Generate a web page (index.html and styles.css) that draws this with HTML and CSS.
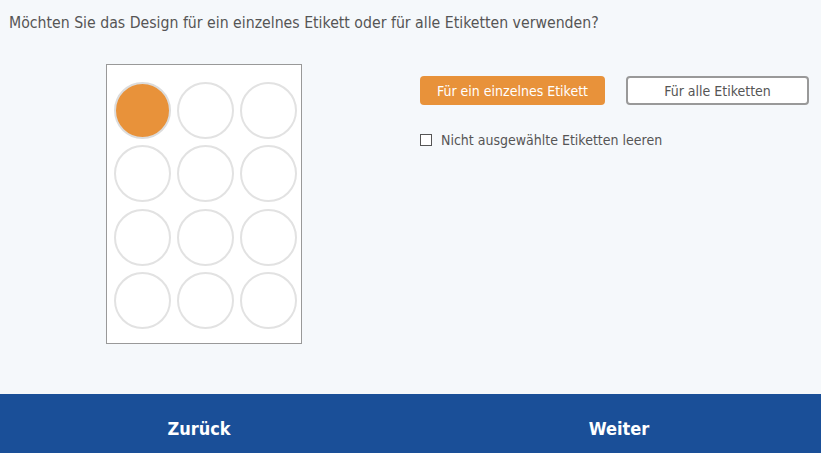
FILE: index.html
```html
<!DOCTYPE html>
<html lang="de">
<head>
  <meta charset="UTF-8">
  <meta name="viewport" content="width=device-width, initial-scale=1">
  <title>Etikett Design</title>
  <link rel="stylesheet" href="styles.css">
</head>
<body>
  <div class="page">
    <div class="main">
      <p class="question">Möchten Sie das Design für ein einzelnes Etikett oder für alle Etiketten verwenden?</p>
      <div class="content">
        <div class="sheet">
          <div class="label selected"></div>
          <div class="label"></div>
          <div class="label"></div>
          <div class="label"></div>
          <div class="label"></div>
          <div class="label"></div>
          <div class="label"></div>
          <div class="label"></div>
          <div class="label"></div>
          <div class="label"></div>
          <div class="label"></div>
          <div class="label"></div>
        </div>
        <div class="options">
          <div class="buttons">
            <button class="btn btn-primary">Für ein einzelnes Etikett</button>
            <button class="btn btn-outline">Für alle Etiketten</button>
          </div>
          <label class="check">
            <span class="box"></span>
            Nicht ausgewählte Etiketten leeren
          </label>
        </div>
      </div>
    </div>
    <div class="footer">
      <button class="nav-btn">Zurück</button>
      <button class="nav-btn">Weiter</button>
    </div>
  </div>
</body>
</html>
```

FILE: styles.css
```css
body {
  margin: 0;
  padding: 0;
  background: #f5f8fb;
  font-family: 'DejaVu Sans Condensed', 'Liberation Sans', sans-serif;
  color: #555;
}
.page {
  height: 453px;
  display: flex;
  flex-direction: column;
}
.main {
  height: 394px;
}
.question {
  margin: 0;
  padding: 14px 0 0 9px;
  font-size: 15.7px;
  line-height: 18px;
  color: #555;
}
.content {
  display: flex;
  padding-top: 32px;
}
.sheet {
  margin-left: 106px;
  width: 187px;
  height: 261px;
  border: 1px solid #999;
  background: #fff;
  padding: 17px 0 0 7px;
  display: grid;
  grid-template-columns: repeat(3, 57px);
  grid-auto-rows: 57px;
  column-gap: 6px;
  row-gap: 6.3px;
  align-content: start;
}
.label {
  width: 57px;
  height: 57px;
  border-radius: 50%;
  border: 2px solid #e2e2e2;
  box-sizing: border-box;
  background: #fff;
}
.label.selected {
  background: #e8923a;
  border-color: #dcdcdc;
}
.options {
  margin-left: 118px;
  padding-top: 12px;
}
.buttons {
  display: flex;
  gap: 21px;
}
.btn {
  height: 29px;
  border-radius: 4px;
  font-family: inherit;
  font-size: 14px;
  cursor: pointer;
}
.btn-primary {
  width: 185px;
  background: #e8923a;
  color: #fff;
  border: none;
}
.btn-outline {
  width: 183px;
  background: #fff;
  color: #555;
  border: 2px solid #999;
}
.check {
  display: flex;
  align-items: center;
  gap: 9px;
  margin-top: 27px;
  font-size: 14px;
  color: #555;
}
.box {
  width: 10px;
  height: 10px;
  border: 1px solid #555;
  background: #fff;
}
.footer {
  flex: 1;
  background: #1a4f98;
  display: grid;
  grid-template-columns: 398px 1fr;
  column-gap: 19px;
}
.nav-btn {
  background: none;
  border: none;
  color: #fff;
  font-family: inherit;
  font-size: 18px;
  font-weight: bold;
  padding: 10px 0 0 0;
  cursor: pointer;
}
```
